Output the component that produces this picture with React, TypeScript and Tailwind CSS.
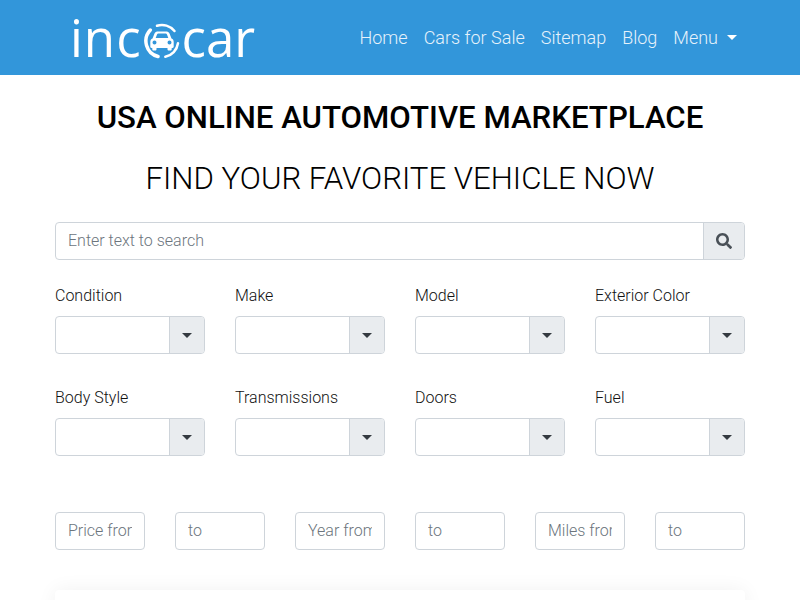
import React from "react";

const row1 = ["Condition", "Make", "Model", "Exterior Color"];
const row2 = ["Body Style", "Transmissions", "Doors", "Fuel"];
const ranges = ["Price from", "to", "Year from", "to", "Miles from", "to"];

function Field({ label }: { label: string }) {
  return (
    <div className="flex flex-col">
      <label className="text-base leading-6 text-[#111] font-light mb-2">{label}</label>
      <div className="flex h-[38px] rounded border border-[#ced4da] overflow-hidden bg-white">
        <div className="flex-1" />
        <div className="w-[35px] bg-[#e9ecef] border-l border-[#ced4da] flex items-center justify-center">
          <svg width="10" height="5" viewBox="0 0 10 5"><path d="M0 0h10L5 5z" fill="#343a40" /></svg>
        </div>
      </div>
    </div>
  );
}

function Logo() {
  return (
    <div className="flex items-center h-[75px] text-white text-[51px] leading-none font-['Open_Sans',sans-serif] ml-[15px]">
      <span className="tracking-[1px]">inc</span>
      <svg width="38" height="38" viewBox="0 0 38 38" fill="none" className="mx-[1px] mt-[7px]">
        <path d="M14 3.800A16 16 0 0 1 31.500 9" stroke="#fff" strokeWidth="2.500" strokeLinecap="round" />
        <path d="M7.300 8A16 16 0 0 0 15 34.500" stroke="#fff" strokeWidth="3.500" strokeLinecap="round" />
        <path d="M35 21.300A16 16 0 0 1 22.300 34.700" stroke="#fff" strokeWidth="2.500" strokeLinecap="round" />
        <path fillRule="evenodd" fill="#fff" d="M11.500 11.500C12.200 10 13.500 9.500 15 9.500h8c1.500 0 2.800.5 3.500 2l2 5c1.500.7 2.200 1.800 2.200 3.200v5c0 .7-.5 1.200-1.200 1.200h-.8v1.300c0 .8-.5 1.300-1.300 1.300h-1.600c-.8 0-1.300-.5-1.300-1.300v-1.300h-11v1.300c0 .8-.5 1.300-1.300 1.300H10.600c-.8 0-1.300-.5-1.300-1.300v-1.300h-.8c-.7 0-1.200-.5-1.200-1.200v-5c0-1.400.7-2.500 2.200-3.200zM12.700 16h12.600l-1.300-3.500c-.3-.6-.7-.9-1.300-.9h-7.400c-.6 0-1 .3-1.300.9zM11.500 18.500a2 2 0 1 0 0 4 2 2 0 0 0 0-4zM26.500 18.500a2 2 0 1 0 0 4 2 2 0 0 0 0-4z" />
      </svg>
      <span>car</span>
    </div>
  );
}

export default function App() {
  return (
    <div className="font-['Roboto',sans-serif] bg-white h-[600px] overflow-hidden">
      <header className="h-[75px] bg-[#3296da] flex justify-between pl-[55px] pr-[63px]">
        <Logo />
        <nav className="flex items-center text-lg font-light text-[#e6f2fb] gap-4">
          <a>Home</a>
          <a>Cars for Sale</a>
          <a>Sitemap</a>
          <a>Blog</a>
          <a className="flex items-center">
            Menu
            <span className="ml-[9px] w-0 h-0 border-x-[5px] border-x-transparent border-t-[5px] border-t-white" />
          </a>
        </nav>
      </header>
      <main className="px-[55px]">
        <h1 className="text-[31.2px] leading-9 font-medium text-black text-center mt-[25px]">USA ONLINE AUTOMOTIVE MARKETPLACE</h1>
        <h2 className="text-[31.2px] leading-[38px] font-light text-black text-center mt-[24px]">FIND YOUR FAVORITE VEHICLE NOW</h2>
        <div className="flex h-[38px] mt-[24px] rounded border border-[#ced4da] overflow-hidden">
          <input placeholder="Enter text to search" className="flex-1 px-3 text-base font-light outline-none placeholder:text-[#6c757d]" />
          <div className="w-[41px] bg-[#e9ecef] border-l border-[#ced4da] flex items-center justify-center">
            <svg width="16" height="16" viewBox="0 0 512 512"><path fill="#495057" d="M505 442.700 405.300 343c-4.500-4.500-10.600-7-17-7H372c27.600-35.300 44-79.700 44-128C416 93.100 322.900 0 208 0S0 93.100 0 208s93.100 208 208 208c48.300 0 92.700-16.400 128-44v16.300c0 6.400 2.500 12.500 7 17l99.700 99.700c9.400 9.400 24.600 9.400 33.900 0l28.300-28.300c9.400-9.400 9.400-24.600.1-34zM208 336c-70.700 0-128-57.200-128-128 0-70.700 57.200-128 128-128 70.700 0 128 57.200 128 128 0 70.700-57.200 128-128 128z" /></svg>
          </div>
        </div>
        <div className="grid grid-cols-4 gap-x-[30px] mt-[24px]">
          {row1.map((l) => <Field key={l} label={l} />)}
        </div>
        <div className="grid grid-cols-4 gap-x-[30px] mt-[32px]">
          {row2.map((l) => <Field key={l} label={l} />)}
        </div>
        <div className="grid grid-cols-6 gap-x-[30px] mt-[56px]">
          {ranges.map((p, i) => (
            <input key={i} placeholder={p} className="w-full min-w-0 h-[38px] px-3 pb-[2px] rounded border border-[#ced4da] text-base font-light outline-none placeholder:text-[#6c757d]" />
          ))}
        </div>
        <div className="h-[200px] mt-10 bg-white rounded shadow-[0_0_20px_rgba(0,0,0,0.06)]" />
      </main>
    </div>
  );
}
